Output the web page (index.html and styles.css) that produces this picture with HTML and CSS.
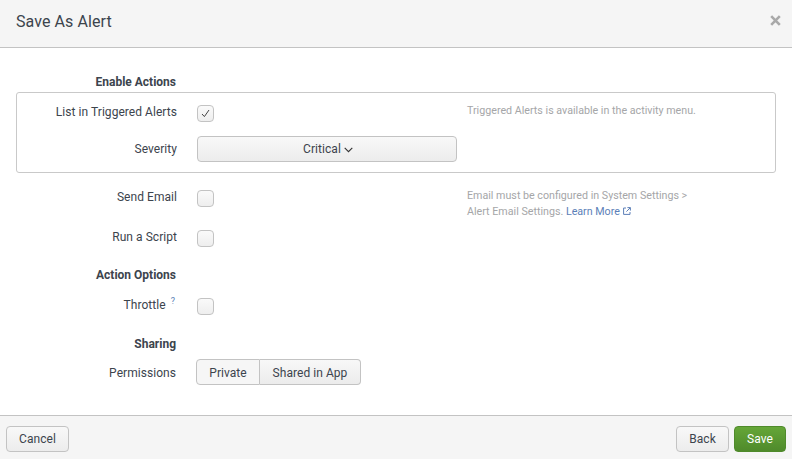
FILE: index.html
```html
<!DOCTYPE html>
<html lang="en">
<head>
	<meta charset="UTF-8">
	<title>Save As Alert</title>
	<link rel="stylesheet" href="styles.css">
</head>
<body>
	<div class="modal">
		<div class="modal-header">
			<h3>Save As Alert</h3>
			<span class="close">
				<svg width="11" height="11" viewBox="0 0 11 11"><path d="M1.2 1.2 L9.8 9.8 M9.8 1.2 L1.2 9.8" stroke="#a9a9a9" stroke-width="2.6" fill="none"/></svg>
			</span>
		</div>
		<div class="modal-body">
			<div class="heading first">Enable Actions</div>
			<div class="box">
				<div class="row row-list">
					<label>List in Triggered Alerts</label>
					<span class="check">
						<svg width="9" height="9" viewBox="0 0 9 9"><path d="M1 5 L3.4 7.6 L8 1" stroke="#444" stroke-width="1" fill="none"/></svg>
					</span>
					<p class="help help-list">Triggered Alerts is available in the activity menu.</p>
				</div>
				<div class="row row-severity">
					<label>Severity</label>
					<button class="btn select">Critical
						<svg width="9" height="6" viewBox="0 0 9 6"><path d="M0.7 0.8 L4.5 4.6 L8.3 0.8" stroke="#333" stroke-width="1.1" fill="none"/></svg>
					</button>
				</div>
			</div>
			<div class="row row-email">
				<label>Send Email</label>
				<span class="check"></span>
				<p class="help">Email must be configured in System Settings &gt;<br>Alert Email Settings. <a href="#">Learn More
					<svg width="8" height="8" viewBox="0 0 8 8"><path d="M3 1 H0.6 V7.4 H7 V5 M4.4 0.6 H7.4 V3.6 M7.2 0.8 L3.4 4.6" stroke="#5c7fb8" stroke-width="1" fill="none"/></svg></a></p>
			</div>
			<div class="row row-script">
				<label>Run a Script</label>
				<span class="check"></span>
			</div>
			<div class="heading options">Action Options</div>
			<div class="row row-throttle">
				<label>Throttle <sup>?</sup></label>
				<span class="check"></span>
			</div>
			<div class="heading sharing">Sharing</div>
			<div class="row row-perm">
				<label>Permissions</label>
				<div class="btn-group">
					<button class="btn active">Private</button>
					<button class="btn">Shared in App</button>
				</div>
			</div>
		</div>
		<div class="modal-footer">
			<button class="btn cancel">Cancel</button>
			<button class="btn back">Back</button>
			<button class="btn save">Save</button>
		</div>
	</div>
</body>
</html>
```

FILE: styles.css
```css
* {
	margin: 0;
	padding: 0;
	box-sizing: border-box;
}
body {
	width: 792px;
	height: 459px;
	overflow: hidden;
	background-color: #fff;
	font: 12px/16px Roboto, "Liberation Sans", sans-serif;
	letter-spacing: 0.05px;
	color: #3c444d;
}
.modal {
	display: flex;
	flex-direction: column;
	height: 459px;
}
.modal-header {
	display: flex;
	justify-content: space-between;
	align-items: center;
	height: 48px;
	padding: 0 11px 7px 16px;
	background-color: #f5f5f5;
	border-bottom: 1px solid #c3c3c3;
}
.modal-header h3 {
	margin-top: 3px;
	font-size: 16px;
	font-weight: 400;
	line-height: 42px;
	letter-spacing: 0.08px;
	color: #3c444d;
}
.close {
	display: flex;
}
.modal-body {
	flex: 1;
	padding: 26px 16px 0;
}
.heading {
	width: 160px;
	height: 16px;
	font-weight: 700;
	letter-spacing: 0;
	text-align: right;
}
.box {
	width: 760px;
	height: 81px;
	margin-top: 2px;
	border: 1px solid #c9c9c9;
	border-radius: 3px;
}
.row {
	display: flex;
	align-items: flex-start;
}
.row label {
	width: 161px;
	text-align: right;
	flex-shrink: 0;
}
.row sup {
	font-size: 9px;
	line-height: 0;
	color: #5c7fb8;
	margin-left: 2px;
}
.check {
	display: flex;
	align-items: center;
	justify-content: center;
	width: 17px;
	height: 17px;
	margin-left: 20px;
	background: linear-gradient(#fafafa, #eee);
	border: 1px solid #c3c3c3;
	border-radius: 4px;
}
.help {
	width: 240px;
	margin-left: 253px;
	font-size: 10.7px;
	letter-spacing: 0;
	color: #a5a6a8;
}
.help a {
	color: #5c7fb8;
	text-decoration: none;
}
.btn {
	height: 26px;
	font: 12px Roboto, "Liberation Sans", sans-serif;
	letter-spacing: 0.05px;
	color: #3c444d;
	background: linear-gradient(#f8f8f8, #ececec);
	border: 1px solid #c3c3c3;
	border-radius: 4px;
}
.select {
	width: 260px;
	margin-left: 20px;
	padding-left: 2px;
}
.btn-group {
	display: flex;
	margin-left: 20px;
}
.btn-group .btn {
	width: 101px;
	padding-top: 1px;
	border-radius: 0 4px 4px 0;
	border-left: 0;
}
.btn-group .active {
	width: 64px;
	background: #f6f6f6;
	border-left: 1px solid #c3c3c3;
	border-radius: 4px 0 0 4px;
}
.modal-footer {
	display: flex;
	height: 44px;
	padding: 10px 6px 0;
	gap: 5px;
	background-color: #f5f5f5;
	border-top: 1px solid #c3c3c3;
}
.cancel {
	width: 63px;
	margin-right: auto;
}
.back {
	width: 53px;
}
.save {
	width: 52px;
	color: #fff;
	background: linear-gradient(#65a637, #4f8a2b);
	border-color: #4f8a2b;
}
.row-list {
	padding-top: 11px;
	height: 43px;
}
.row-list label,
.row-severity label {
	width: 160px;
}
.row-list .check {
	margin-top: 1px;
}
.help-list {
	width: 300px;
	margin-top: -1px;
}
.row-severity label {
	padding-top: 5px;
}
.row-email {
	margin-top: 16px;
	height: 40px;
}
.row-email .check {
	margin-top: 1px;
}
.row-email .help {
	margin-top: -1px;
}
.row-script .check {
	margin-top: 1px;
}
.row-script {
	height: 38px;
}
.row-throttle {
	margin-top: 14px;
	height: 39px;
}
.row-throttle .check {
	margin-top: 1px;
}
.row-throttle label {
	padding-right: 2px;
}
.row-perm {
	margin-top: 7px;
}
.row-perm label {
	width: 160px;
	padding-top: 6px;
}
```
